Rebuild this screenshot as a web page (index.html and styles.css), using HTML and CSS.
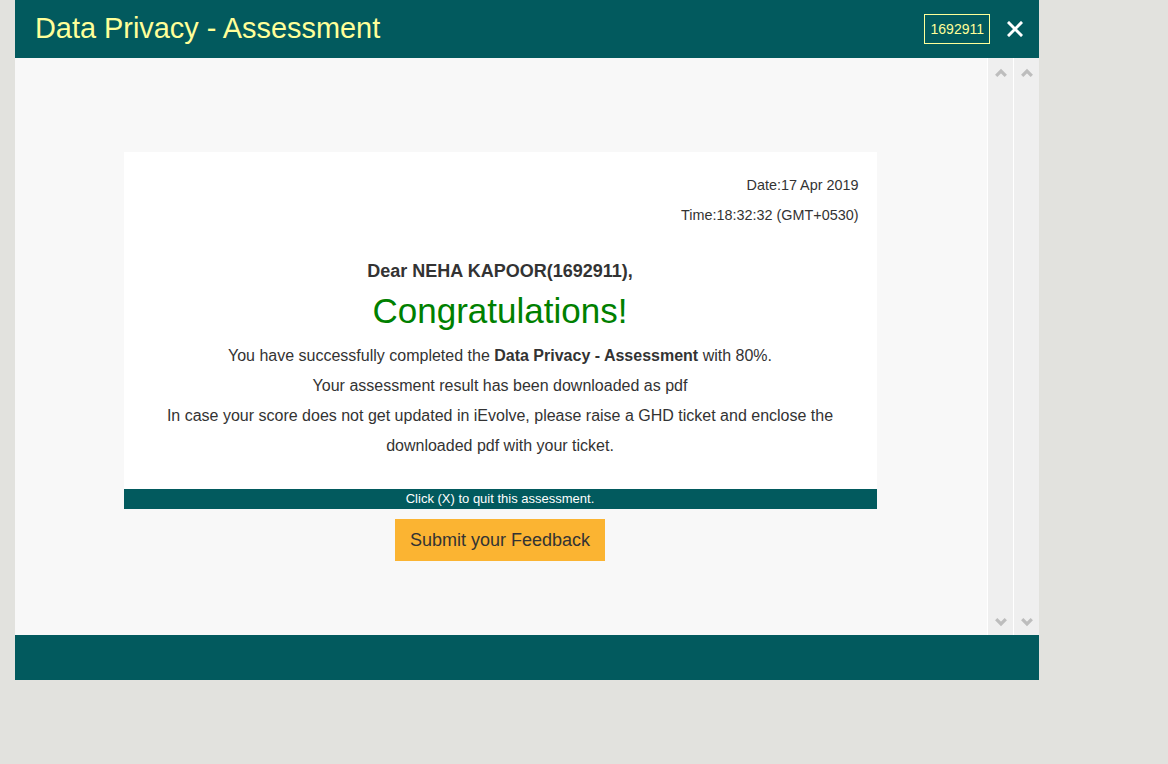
FILE: index.html
```html
<!DOCTYPE html>
<html lang="en">
<head>
<meta charset="utf-8">
<title>Data Privacy - Assessment</title>
<link rel="stylesheet" href="styles.css">
</head>
<body>
<div class="dialog">
  <header class="header">
    <h1 class="title">Data Privacy - Assessment</h1>
    <div class="header-right">
      <span class="emp-id">1692911</span>
      <button class="close" aria-label="Close">
        <svg width="16" height="16" viewBox="0 0 16 16"><path d="M2 2 L14 14 M14 2 L2 14" stroke="#fff" stroke-width="3" stroke-linecap="square" fill="none"/></svg>
      </button>
    </div>
  </header>
  <div class="body">
    <main class="main">
      <section class="card">
        <div class="meta">
          <div>Date:17 Apr 2019</div>
          <div>Time:18:32:32 (GMT+0530)</div>
        </div>
        <div class="dear">Dear NEHA KAPOOR(1692911),</div>
        <div class="congrats">Congratulations!</div>
        <div class="message">
          <p>You have successfully completed the <b>Data Privacy - Assessment</b> with 80%.</p>
          <p>Your assessment result has been downloaded as pdf</p>
          <p>In case your score does not get updated in iEvolve, please raise a GHD ticket and enclose the downloaded pdf with your ticket.</p>
        </div>
      </section>
      <div class="strip">Click (X) to quit this assessment.</div>
      <button class="feedback">Submit your Feedback</button>
    </main>
    <div class="scrollbar">
      <svg class="chev" width="12" height="9" viewBox="0 0 12 9"><path d="M1.2 7.8 L6 3 L10.8 7.8" stroke="#bdbdbd" stroke-width="3.2" fill="none"/></svg>
      <svg class="chev" width="12" height="9" viewBox="0 0 12 9"><path d="M1.2 1.2 L6 6 L10.8 1.2" stroke="#bdbdbd" stroke-width="3.2" fill="none"/></svg>
    </div>
    <div class="scrollbar">
      <svg class="chev" width="12" height="9" viewBox="0 0 12 9"><path d="M1.2 7.8 L6 3 L10.8 7.8" stroke="#bdbdbd" stroke-width="3.2" fill="none"/></svg>
      <svg class="chev" width="12" height="9" viewBox="0 0 12 9"><path d="M1.2 1.2 L6 6 L10.8 1.2" stroke="#bdbdbd" stroke-width="3.2" fill="none"/></svg>
    </div>
  </div>
  <footer class="footer"></footer>
</div>
</body>
</html>
```
FILE: styles.css
```css
html, body {
  margin: 0;
  padding: 0;
  background: #e2e2de;
  font-family: "Liberation Sans", Arial, sans-serif;
}

.dialog {
  width: 1024px;
  margin-left: 15px;
  display: flex;
  flex-direction: column;
}

.header {
  height: 58px;
  background: #025a5e;
  display: flex;
  align-items: center;
  justify-content: space-between;
  padding: 0 16px 2px 20px;
  box-sizing: border-box;
}

.title {
  margin: 0;
  font-size: 28.9px;
  font-weight: normal;
  color: #ffff99;
  line-height: 1;
}

.header-right {
  display: flex;
  align-items: center;
  gap: 17px;
  padding-top: 2px;
}

.emp-id {
  border: 1px solid #ffff99;
  color: #ffff99;
  font-size: 14px;
  height: 28px;
  line-height: 28px;
  padding: 0 5px 0 6px;
}

.close {
  background: none;
  border: 0;
  padding: 0;
  width: 16px;
  height: 16px;
  display: flex;
  cursor: pointer;
}

.body {
  display: flex;
  height: 577px;
}

.main {
  flex: 1;
  background: #f8f8f8;
  padding: 94px 2px 0 0;
  display: flex;
  flex-direction: column;
  align-items: center;
}

.card {
  width: 753px;
  box-sizing: border-box;
  background: #fff;
  padding: 18px 18px 28px;
  color: #333;
  text-align: center;
}

.meta {
  text-align: right;
  font-size: 14.4px;
  line-height: 30px;
}

.dear {
  margin-top: 26px;
  font-size: 18px;
  font-weight: bold;
  line-height: 30px;
}

.congrats {
  margin-top: 5px;
  font-size: 35px;
  line-height: 40px;
  color: #008000;
}

.message {
  margin-top: 10px;
  font-size: 16px;
  line-height: 30px;
}

.message p {
  margin: 0;
}

.strip {
  width: 753px;
  height: 20px;
  line-height: 20px;
  background: #025a5e;
  color: #fff;
  font-size: 13px;
  text-align: center;
}

.feedback {
  margin-top: 10px;
  height: 42px;
  padding: 0 15px;
  border: 0;
  background: #fbb432;
  color: #333;
  font-family: "Liberation Sans", Arial, sans-serif;
  font-size: 18px;
  cursor: pointer;
}

.scrollbar {
  width: 25px;
  border-left: 1px solid #fff;
  background: #efefef;
  display: flex;
  flex-direction: column;
  justify-content: space-between;
  align-items: center;
  padding: 10px 0 8px;
}

.chev {
  display: block;
}

.footer {
  height: 45px;
  background: #025a5e;
}
```
